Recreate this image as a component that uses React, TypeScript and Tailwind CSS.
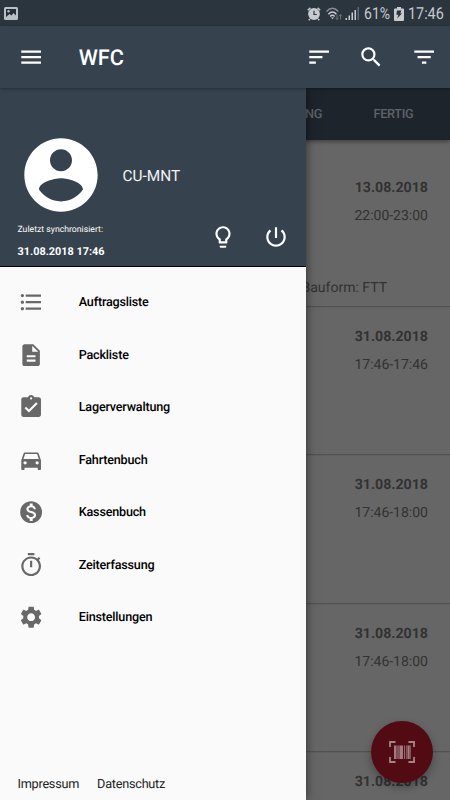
import type { ReactNode } from "react";
import {
  MdAssignmentTurnedIn,
  MdDescription,
  MdDirectionsCar,
  MdFilterList,
  MdFormatListBulleted,
  MdMenu,
  MdMonetizationOn,
  MdSearch,
  MdSettings,
  MdSort,
} from "react-icons/md";

interface Order {
  date: string;
  time?: string;
  note?: string;
}

interface MenuEntry {
  label: string;
  icon: ReactNode;
}

const orders: Order[] = [
  { date: "13.08.2018", time: "22:00-23:00", note: "Bauform: FTT" },
  { date: "31.08.2018", time: "17:46-17:46" },
  { date: "31.08.2018", time: "17:46-18:00" },
  { date: "31.08.2018", time: "17:46-18:00" },
  { date: "31.08.2018" },
];

const menuEntries: MenuEntry[] = [
  { label: "Auftragsliste", icon: <MdFormatListBulleted /> },
  { label: "Packliste", icon: <MdDescription /> },
  { label: "Lagerverwaltung", icon: <MdAssignmentTurnedIn /> },
  { label: "Fahrtenbuch", icon: <MdDirectionsCar /> },
  { label: "Kassenbuch", icon: <MdMonetizationOn /> },
  { label: "Zeiterfassung", icon: <StopwatchIcon /> },
  { label: "Einstellungen", icon: <MdSettings /> },
];

function StopwatchIcon() {
  return (
    <svg viewBox="0 0 24 24" width="1em" height="1em" fill="currentColor">
      <path d="M15 1H9v2h6V1zm-4 13h2V8h-2v6zm8.03-6.61l1.42-1.42c-.43-.51-.9-.99-1.41-1.41l-1.42 1.42C16.07 4.74 14.12 4 12 4c-4.97 0-9 4.03-9 9s4.02 9 9 9 9-4.03 9-9c0-2.12-.74-4.07-1.97-5.61zM12 20c-3.87 0-7-3.13-7-7s3.13-7 7-7 7 3.13 7 7-3.13 7-7 7z" />
    </svg>
  );
}

function AvatarIcon() {
  return (
    <svg viewBox="0 0 24 24" className="h-[88px] w-[88px]" fill="currentColor">
      <path d="M12 2C6.48 2 2 6.48 2 12s4.48 10 10 10 10-4.48 10-10S17.52 2 12 2zm0 3c1.66 0 3 1.34 3 3s-1.34 3-3 3-3-1.34-3-3 1.34-3 3-3zm0 14.2c-2.5 0-4.71-1.28-6-3.22.03-1.99 4-3.08 6-3.08 1.99 0 5.97 1.09 6 3.08-1.29 1.94-3.5 3.22-6 3.22z" />
    </svg>
  );
}

function BulbIcon() {
  return (
    <svg viewBox="0 0 24 24" className="h-[26px] w-[26px]" fill="currentColor">
      <path d="M9 21c0 .55.45 1 1 1h4c.55 0 1-.45 1-1v-1H9v1zm3-19C8.14 2 5 5.14 5 9c0 2.38 1.19 4.47 3 5.74V17c0 .55.45 1 1 1h6c.55 0 1-.45 1-1v-2.26c1.81-1.27 3-3.36 3-5.74 0-3.86-3.14-7-7-7zm2.85 11.1l-.85.6V16h-4v-2.3l-.85-.6C7.8 12.16 7 10.63 7 9c0-2.76 2.24-5 5-5s5 2.24 5 5c0 1.63-.8 3.16-2.15 4.1z" />
    </svg>
  );
}

function PowerIcon() {
  return (
    <svg viewBox="0 0 24 24" className="h-[26px] w-[26px]" fill="currentColor">
      <path d="M13 3h-2v10h2V3zm4.83 2.17l-1.42 1.42C17.99 7.86 19 9.81 19 12c0 3.87-3.13 7-7 7s-7-3.13-7-7c0-2.19 1.01-4.14 2.58-5.42L6.17 5.17C4.23 6.82 3 9.26 3 12c0 4.97 4.03 9 9 9s9-4.03 9-9c0-2.74-1.23-5.18-3.17-6.83z" />
    </svg>
  );
}

function BarcodeIcon() {
  return (
    <svg viewBox="0 0 28 24" className="h-6 w-7" fill="none">
      <path d="M2 7V2h5.500M20.500 2H26v5M26 17v5h-5.500M7.500 22H2v-5" stroke="#a58488" strokeWidth="1.8" />
      <path d="M6 5.500h2.500v13.500H6zM12 5.500h3v13.500h-3zM19.500 5.500h2.200v13.500h-2.200z" fill="#a07b80" />
      <path d="M8.500 5.500h3.500v13.500H8.500zM18 5.500h1.500v13.500H18zM21.700 5.500h1.300v13.500h-1.300z" fill="#80525a" />
      <path d="M16.200 5.500h.9v13.500h-.9z" fill="#a58488" />
    </svg>
  );
}

function StatusBar() {
  return (
    <div className="flex h-[26px] shrink-0 items-center bg-[#2b353e] pl-1 pr-[6px] pt-[1px] text-[#c7cbcf]">
      <svg viewBox="0 0 14 13" className="h-[13px] w-[14px]">
        <rect width="14" height="13" rx="1.500" fill="#b9bfc6" />
        <path d="M2 2h10v6.500L9.500 6 7.500 8.500 5.500 7 2 10z" fill="#252e36" />
        <circle cx="4.500" cy="4.300" r="1.200" fill="#b9bfc6" />
      </svg>
      {/* alarm */}
      <svg viewBox="0 0 14 14" className="ml-auto h-[14px] w-[14px]">
        <circle cx="7" cy="7" r="5.900" fill="#c7cbcf" />
        <path d="M.8 3.300L3.400.9M10.600.9l2.600 2.400M2.800 12l-1 1.300M11.200 12l1 1.300" stroke="#c7cbcf" strokeWidth="1.500" />
        <path d="M7 3.800v3.700h2.800" fill="none" stroke="#2b353e" strokeWidth="1.200" />
      </svg>
      {/* wifi with traffic arrows */}
      <svg viewBox="0 0 17 14" className="ml-[5px] h-[14px] w-[17px]" fill="none">
        <path d="M.5 4.500q5.900-6.400 11.800 0" stroke="#858d94" strokeWidth="1.500" />
        <path d="M2.400 7.200q4-4.300 8 0M4.200 9.500q2.200-2.300 4.400 0" stroke="#c7cbcf" strokeWidth="1.500" />
        <path d="M5 10.500h3L6.500 12.300z" fill="#c7cbcf" />
        <path d="M11 7.500v5M9.500 10.700l1.500 1.800 1.500-1.800M14.500 12.500v-5M13 9.300l1.500-1.800L16 9.300" stroke="#67717a" />
      </svg>
      <svg viewBox="0 0 14 13" className="ml-[2px] mb-px h-[13px] w-[14px]">
        <path d="M.5 11h1.500v2H.5zM3.500 8.500H5V13H3.500zM6.500 5.500H8V13H6.500zM9.500 3H11v10H9.500z" fill="#c7cbcf" />
        <path d="M12.500 0H14v13h-1.500z" fill="#606a72" />
      </svg>
      <span className="ml-[5px] mt-[3px] w-[26.500px] origin-left scale-x-[0.85] text-[16.500px] leading-none">61%</span>
      <svg viewBox="0 0 10 14" className="ml-1 h-[14px] w-[10px]">
        <path d="M3 0h4v1.500h2q1 0 1 1V13q0 1-1 1H1q-1 0-1-1V2.500q0-1 1-1h2z" fill="#c7cbcf" />
        <path d="M3 3.500h4.500L6.300 6.500H8L3.200 11.500l1.200-3.700H2.300z" fill="#2b353e" />
      </svg>
      <span className="ml-[4px] mt-[3px] w-[36px] origin-left scale-x-[0.87] text-[16.500px] leading-none">17:46</span>
    </div>
  );
}

function Toolbar() {
  return (
    <header className="relative z-20 flex h-[62px] shrink-0 items-center bg-[#36434f] pl-[17.500px] pr-[13px] text-[26.250px] text-white shadow-[0_1px_3px_rgba(0,0,0,0.35)]">
      <MdMenu />
      <h1 className="ml-[35px] mt-[3px] text-[21.700px] font-medium leading-none">WFC</h1>
      <div className="ml-auto flex gap-[26.250px]">
        <MdSort />
        <MdSearch />
        <MdFilterList />
      </div>
    </header>
  );
}

function OrderList() {
  return (
    <div className="flex h-full flex-col overflow-hidden bg-[#666]">
      <nav className="relative flex h-[52px] shrink-0 items-center bg-[#1e242c] pt-px text-[12.700px] font-medium tracking-[-0.300px] text-[#5f6266] shadow-[0_2px_4px_rgba(0,0,0,0.35)]">
        <span className="w-[322px] text-right">BEARBEITUNG</span>
        <span className="ml-[51.500px]">FERTIG</span>
      </nav>
      <ul className="pt-[18px]">
        {orders.map((order, index) => (
          <li
            key={index}
            className="flex h-[148.500px] flex-col border-b border-[#525252] pr-[22px] pt-[19px] text-[#323232] shadow-[0_1px_0_#606060]"
          >
            <span className="text-right text-[14.200px] font-bold leading-[22px]">{order.date}</span>
            {order.time && <span className="mt-[6px] text-right text-[14px] leading-[22px]">{order.time}</span>}
            {order.note && <span className="ml-[301.500px] mt-[50px] text-[14px] leading-[22px]">{order.note}</span>}
          </li>
        ))}
      </ul>
    </div>
  );
}

function Drawer() {
  return (
    <aside className="absolute inset-y-0 left-0 flex w-[306px] flex-col bg-[#fafafa] shadow-[0_0_10px_rgba(0,0,0,0.55)]">
      <div className="h-[179px] shrink-0 border-b border-black bg-[#36434f] text-white">
        <div className="flex items-center pl-[17px] pt-[43px]">
          <AvatarIcon />
          <span className="ml-[17.500px] mt-[4px] text-[15.400px] text-[#f2f3f4]">CU-MNT</span>
        </div>
        <div className="flex pl-[17.500px] pr-[17.500px]">
          <div className="flex flex-col">
            <span className="mt-[5px] text-[8.700px] leading-3">Zuletzt synchronisiert:</span>
            <span className="mt-[10px] text-[10.900px] font-bold leading-3">31.08.2018 17:46</span>
          </div>
          <div className="ml-auto mt-[5px] flex gap-[26.500px]">
            <BulbIcon />
            <PowerIcon />
          </div>
        </div>
      </div>
      <ul className="pt-[9px]">
        {menuEntries.map((entry) => (
          <li key={entry.label} className="flex h-[52.500px] items-center pl-[17.500px]">
            <span className="text-[26.250px] text-[#686868]">{entry.icon}</span>
            <span className="ml-[35px] mt-[3px] text-[12.600px] font-medium tracking-[-0.200px] text-black">
              {entry.label}
            </span>
          </li>
        ))}
      </ul>
      <div className="mt-auto flex gap-[18px] pb-[5px] pl-[17.500px] text-[12.700px] leading-5 tracking-[-0.250px] text-[#222]">
        <span>Impressum</span>
        <span>Datenschutz</span>
      </div>
    </aside>
  );
}

export default function App() {
  return (
    <div className="flex h-[800px] w-[450px] flex-col overflow-hidden bg-[#666] font-[Roboto,sans-serif] [text-rendering:geometricPrecision]">
      <StatusBar />
      <Toolbar />
      <main className="relative min-h-0 flex-1">
        <OrderList />
        <button className="absolute bottom-[17.500px] right-[17.500px] flex h-[61.500px] w-[61.500px] items-center justify-center rounded-full bg-[#530b13] shadow-[0_4px_8px_rgba(0,0,0,0.3)]">
          <BarcodeIcon />
        </button>
        <Drawer />
      </main>
    </div>
  );
}
